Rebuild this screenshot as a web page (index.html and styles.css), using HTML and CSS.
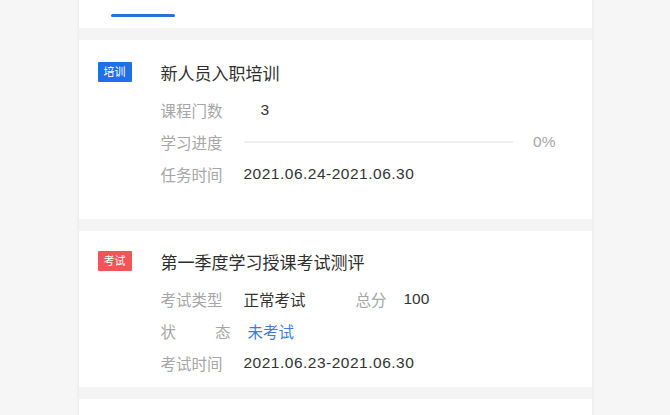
FILE: index.html
```html
<!DOCTYPE html>
<html lang="zh-CN">
<head>
    <meta charset="UTF-8">
    <title>我的任务</title>
    <link rel="stylesheet" href="styles.css">
</head>
<body>

<div class="page">
    <div class="tabs">
        <div class="tab-line"></div>
    </div>

    <div class="task task-train">
        <div class="task-head">
            <span class="tag tag-train">培训</span>
            <span class="task-title">新人员入职培训</span>
        </div>
        <div class="task-info">
            <div class="row">
                <div class="label">课程门数</div>
                <div class="value num">3</div>
            </div>
            <div class="row">
                <div class="label">学习进度</div>
                <div class="progress"><div class="progress-bar" style="width: 0%"></div></div>
                <div class="percent">0%</div>
            </div>
            <div class="row">
                <div class="label">任务时间</div>
                <div class="value date">2021.06.24-2021.06.30</div>
            </div>
        </div>
    </div>

    <div class="task task-exam">
        <div class="task-head">
            <span class="tag tag-exam">考试</span>
            <span class="task-title">第一季度学习授课考试测评</span>
        </div>
        <div class="task-info">
            <div class="row">
                <div class="label">考试类型</div>
                <div class="value value-type">正常考试</div>
                <div class="label label-short">总分</div>
                <div class="value">100</div>
            </div>
            <div class="row">
                <div class="label label-split"><span>状</span><span>态</span></div>
                <div class="value status">未考试</div>
            </div>
            <div class="row">
                <div class="label">考试时间</div>
                <div class="value date">2021.06.23-2021.06.30</div>
            </div>
        </div>
    </div>

    <div class="task task-next"></div>
</div>

</body>
</html>
```

FILE: styles.css
```css
html, body {
    margin: 0;
    padding: 0;
    height: 100%;
    overflow: hidden;
}
body {
    background-color: #f6f6f6;
    font-family: "Liberation Sans", "Noto Sans CJK SC", sans-serif;
    color: #333;
}
.page {
    width: 513px;
    margin: 0 auto;
    background-color: #f4f4f4;
    box-shadow: 0 0 4px rgba(0, 0, 0, 0.08);
    min-height: 100%;
}

/* 顶部tab */
.tabs {
    height: 28px;
    background-color: #fff;
    overflow: hidden;
}
.tab-line {
    width: 64px;
    height: 3px;
    margin: 14px 0 0 32px;
    border-radius: 2px;
    background-color: #2a6fd8;
}

/* 任务卡片 */
.task {
    margin-top: 12px;
    padding: 22px 36px 8px 19px;
    background-color: #fff;
}
.task-train {
    padding-bottom: 29px;
}
.task-exam {
    padding-top: 20px;
}
.task-next {
    height: 40px;
    padding: 0;
}
.task-head {
    display: flex;
    align-items: center;
    height: 20px;
}
.tag {
    width: 34px;
    height: 20px;
    line-height: 20px;
    text-align: center;
    font-size: 11px;
    color: #fff;
    border-radius: 1px;
}
.tag-train {
    background-color: #1f6fe8;
}
.tag-exam {
    background-color: #f25555;
}
.task-title {
    margin-left: 29px;
    font-size: 17px;
    color: #2e2e2e;
}

.task-info {
    margin: 12px 0 0 63px;
}
.row {
    display: flex;
    align-items: center;
    height: 32px;
    font-size: 15.5px;
}
.label {
    width: 83px;
    flex-shrink: 0;
    color: #a6a6a6;
}
.label-short {
    width: 48px;
}
.label-split {
    display: flex;
    justify-content: space-between;
    width: 70px;
    margin-right: 17px;
}
.value {
    color: #333;
}
.num {
    padding-left: 17px;
}
.date {
    letter-spacing: 0.5px;
}
.value-type {
    width: 112px;
}
.status {
    color: #3b7ddf;
}

/* 进度条 */
.progress {
    flex: 1;
    height: 2px;
    margin-right: 20px;
    background-color: #efefef;
}
.progress-bar {
    height: 100%;
    background-color: #1f6fe8;
}
.percent {
    color: #a6a6a6;
}
```
